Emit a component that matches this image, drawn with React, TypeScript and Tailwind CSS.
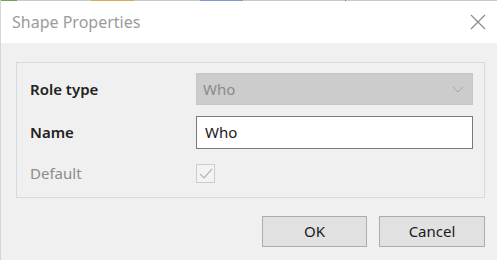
import { FC } from 'react';

const font = { fontFamily: '"Noto Sans", "Open Sans", sans-serif' };

const TopStrip: FC = () => (
  <div className="flex h-px w-full bg-[#c9c9c9]">
    <div className="w-[16px] bg-[#6aa84f]" />
    <div className="w-[74px]" />
    <div className="w-[43px] bg-[#d4b04a]" />
    <div className="w-[66px]" />
    <div className="w-[43px] bg-[#7c9bd1]" />
    <div className="w-[102px]" />
    <div className="w-px bg-[#777]" />
  </div>
);

const App: FC = () => {
  return (
    <div className="w-[497px] h-[260px] flex flex-col bg-[#f0f0f0] border-l border-[#d6d6d6]" style={font}>
      <TopStrip />
      <div className="h-[42px] bg-white flex items-center justify-between pl-[11px] pr-[11px]">
        <span className="text-[16px] text-[#9b9b9b]">Shape Properties</span>
        <svg width="16" height="16" viewBox="0 0 16 16" className="text-[#8a8a8a]">
          <path d="M1 1 L15 15 M15 1 L1 15" stroke="currentColor" strokeWidth="1.2" fill="none" />
        </svg>
      </div>

      <div className="flex-1 pl-[15px] pr-[12px] pt-[19px]">
        <div className="border border-[#dadada] h-[136px] pl-[13px] pr-[11px] pt-[10px] grid grid-cols-[166px_1fr] content-start">
          <div className="flex items-center h-[32px] text-[15px] font-semibold text-[#222]">Role type</div>
          <div className="h-[32px] bg-[#cccccc] border border-[#c6c6c6] flex items-center justify-between pl-[6px] pr-[8px]">
            <span className="text-[15px] text-[#8a8a8a]">Who</span>
            <svg width="12" height="7" viewBox="0 0 12 7">
              <path d="M1 1 L6 6 L11 1" stroke="#a9a9a9" strokeWidth="1" fill="none" />
            </svg>
          </div>

          <div className="flex items-center h-[33px] mt-[11px] text-[15px] font-semibold text-[#222]">Name</div>
          <div className="h-[33px] mt-[11px] bg-white border border-[#7a7a7a] flex items-center pl-[8px]">
            <span className="text-[15px] text-[#1a1a1a]">Who</span>
          </div>

          <div className="flex items-center h-[19px] mt-[15px] text-[15px] text-[#8c8c8c]">Default</div>
          <div className="mt-[15px] flex items-center">
            <div className="w-[19px] h-[19px] border border-[#cccccc] bg-[#f3f3f3] flex items-center justify-center">
              <svg width="14" height="12" viewBox="0 0 14 12">
                <path d="M1 6 L5 10 L13 1" stroke="#b5b5b5" strokeWidth="1.2" fill="none" />
              </svg>
            </div>
          </div>
        </div>

        <div className="flex justify-end gap-[12px] mt-[18px]">
          <button className="w-[105px] h-[31px] bg-[#e1e1e1] border border-[#adadad] text-[15px] text-[#1a1a1a]">OK</button>
          <button className="w-[106px] h-[31px] bg-[#e1e1e1] border border-[#adadad] text-[15px] text-[#1a1a1a]">Cancel</button>
        </div>
      </div>
    </div>
  );
};

export default App;
